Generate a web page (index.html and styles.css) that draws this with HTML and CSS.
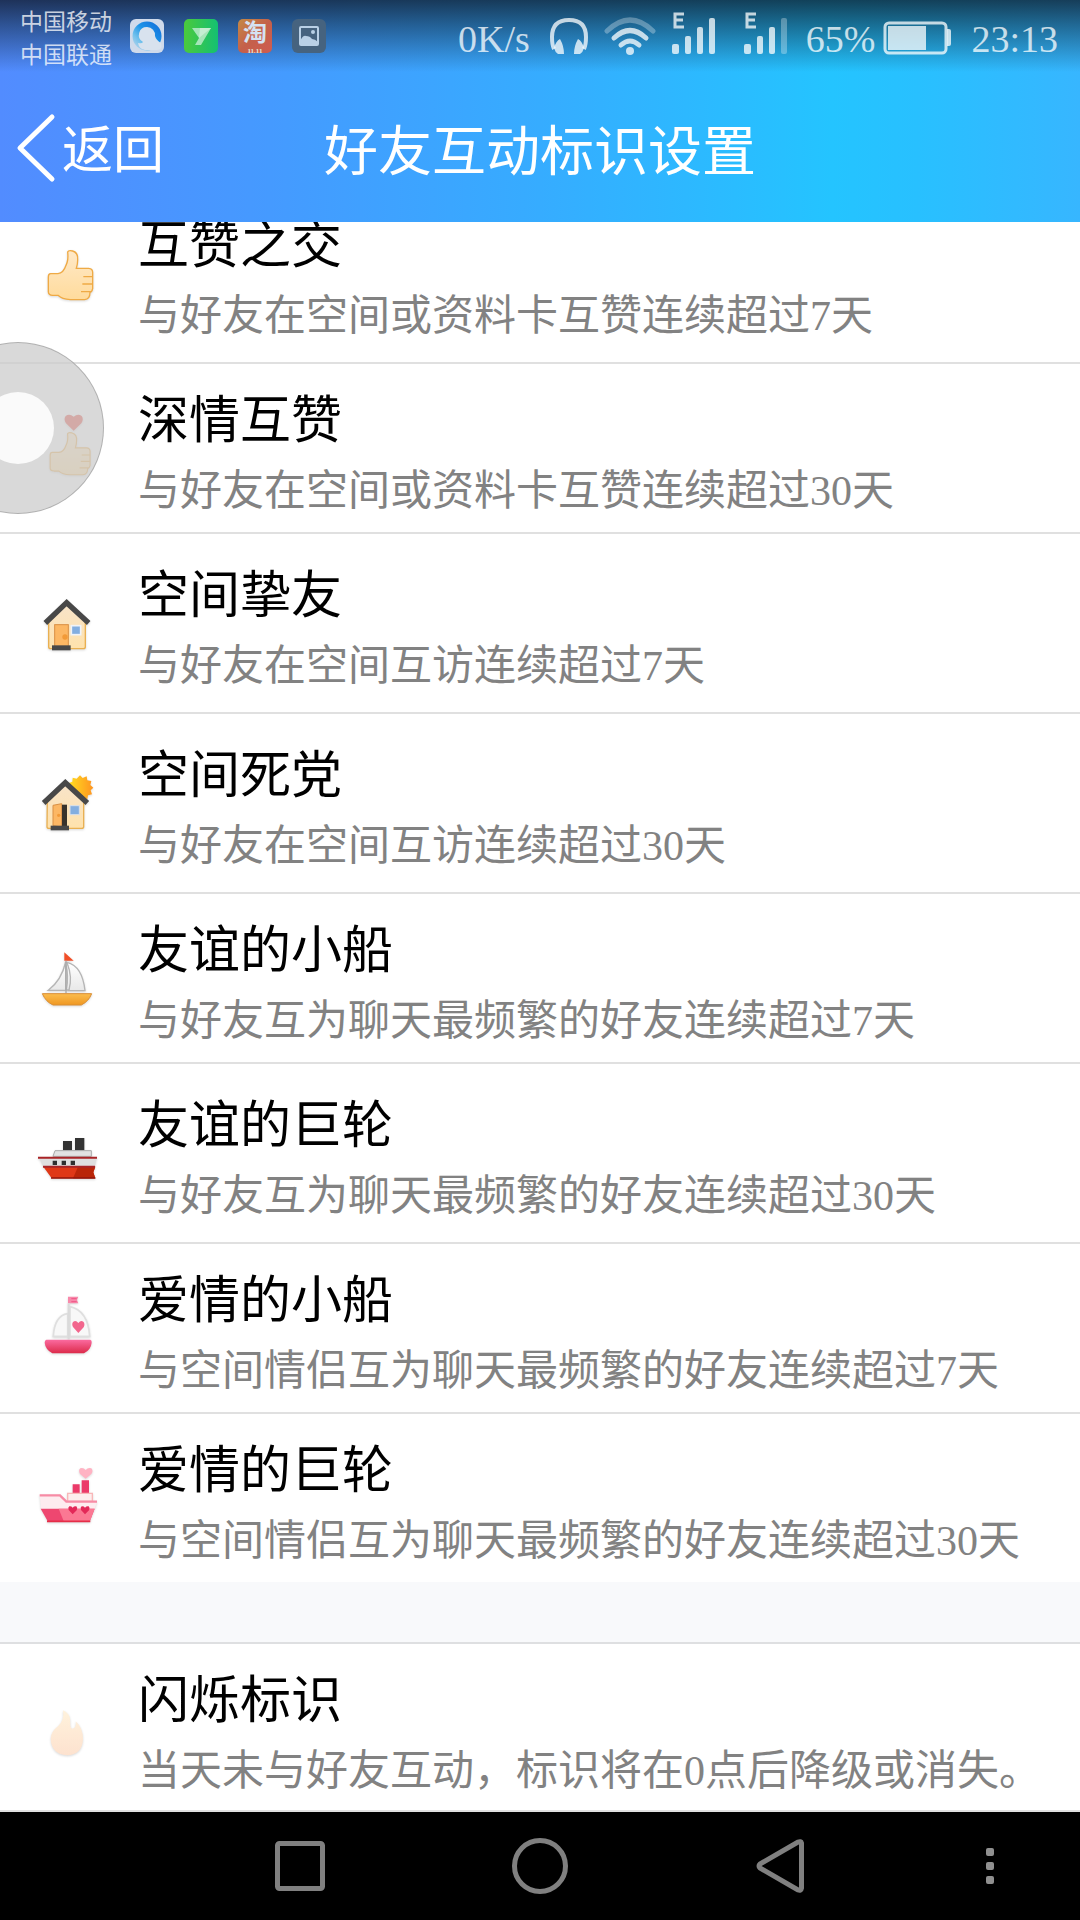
FILE: index.html
```html
<!DOCTYPE html>
<html lang="zh-CN">
<head>
    <meta charset="UTF-8">
    <meta name="viewport" content="width=device-width, initial-scale=1.0">
    <title>好友互动标识设置</title>
    <link rel="stylesheet" href="styles.css">
</head>
<body>
    <!-- Shared gradients -->
    <svg class="defs" aria-hidden="true">
        <defs>
            <linearGradient id="skin" x1="0" y1="0" x2="0" y2="1"><stop offset="0" stop-color="#ffe9c8"/><stop offset="1" stop-color="#ffdb9c"/></linearGradient>
            <linearGradient id="wall" x1="0" y1="0" x2="0" y2="1"><stop offset="0" stop-color="#f8e4ca"/><stop offset="1" stop-color="#ffe2ac"/></linearGradient>
            <linearGradient id="sail" x1="0" y1="0" x2="0" y2="1"><stop offset="0" stop-color="#ffffff"/><stop offset="1" stop-color="#e8e8e8"/></linearGradient>
            <linearGradient id="wood" x1="0" y1="0" x2="0" y2="1"><stop offset="0" stop-color="#fbbd4e"/><stop offset="1" stop-color="#ef9722"/></linearGradient>
            <linearGradient id="pink" x1="0" y1="0" x2="0" y2="1"><stop offset="0" stop-color="#fb6ba0"/><stop offset="1" stop-color="#dc2a4a"/></linearGradient>
            <linearGradient id="sun"><stop offset="0" stop-color="#ffdf20"/><stop offset="1" stop-color="#ff9420"/></linearGradient>
            <linearGradient id="flame" x1="0" y1="0" x2="0" y2="1"><stop offset="0" stop-color="#fff2dc"/><stop offset="1" stop-color="#fde2cf"/></linearGradient>
            <linearGradient id="ring" x1="0" y1="1" x2="1" y2="0"><stop offset="0" stop-color="#cfdaeb"/><stop offset=".3" stop-color="#6fc0ec"/><stop offset=".55" stop-color="#1c94e8"/><stop offset="1" stop-color="#1268d8"/></linearGradient>
            <linearGradient id="green"><stop offset="0" stop-color="#4bca3c"/><stop offset="1" stop-color="#14c072"/></linearGradient>
            <linearGradient id="orange" x1="0" y1="0" x2="1" y2="1"><stop offset="0" stop-color="#c48a45"/><stop offset=".5" stop-color="#c4604a"/><stop offset="1" stop-color="#cf5c50"/></linearGradient>
        </defs>
    </svg>

    <header class="header">
        <div class="status-bar">
            <div class="carriers">
                <span>中国移动</span>
                <span>中国联通</span>
            </div>
            <div class="notifications">
                <svg viewBox="0 0 34 34">
                    <rect width="34" height="34" rx="6" fill="#cfdaeb"/>
                    <circle cx="17" cy="17" r="14.500" fill="url(#ring)"/>
                    <path d="M17 8A8 8 0 0 1 25 17Q26 21 31 24Q33 31 27 31H15Q9 30 8 24Q12 25 13 23A8 8 0 0 1 17 8Z" fill="#d8e2ee"/>
                </svg>
                <svg viewBox="0 0 34 34">
                    <rect width="34" height="34" rx="5" fill="url(#green)"/>
                    <path d="M8 9H27L17 26H11L15 19Z" fill="#a5e5b8"/>
                    <path d="M16 9H27L15 19Z" fill="#c4eed2"/>
                </svg>
                <svg viewBox="0 0 34 34">
                    <rect width="34" height="34" rx="5" fill="url(#orange)"/>
                    <text x="17" y="22" font-size="24" font-weight="700" text-anchor="middle" fill="#d5e2f2" class="cjk">淘</text>
                    <text x="17" y="34" font-size="7" font-weight="700" text-anchor="middle" fill="#e5eadc">11.11</text>
                </svg>
                <svg viewBox="0 0 34 34">
                    <rect width="34" height="34" rx="6" fill="#46637f"/>
                    <rect x="8" y="8" width="18" height="18" rx="1" fill="none" stroke="#b9d0e6" stroke-width="2"/>
                    <path d="M8 22Q11 16 14 17Q18 17 20 20Q23 20 26 23V26H8Z" fill="#b9d0e6"/>
                    <circle cx="21" cy="13" r="2" fill="#b9d0e6"/>
                </svg>
            </div>
            <div class="indicators">
                <span class="status-text speed">0K/s</span>
                <svg width="38" height="38" viewBox="0 0 38 38" class="headset">
                    <path d="M4 32Q2 28 2 20C2 8 8 3 19 3S36 8 36 20Q36 28 34 32" fill="none" stroke="currentColor" stroke-width="4"/>
                    <path d="M10 22Q14 29 14 37H8Q5 35 4 31Q6 24 10 22ZM28 22Q24 29 24 37H30Q33 35 34 31Q32 24 28 22Z" fill="currentColor"/>
                </svg>
                <svg width="52" height="38" viewBox="0 0 52 38" class="wifi">
                    <g fill="none" stroke="currentColor" stroke-width="5" stroke-linecap="round">
                        <path d="M3 14Q26-8 49 14" opacity=".4"/>
                        <path d="M10 21Q26 6 42 21"/>
                        <path d="M17 28Q26 20 35 28"/>
                    </g>
                    <circle cx="26" cy="34" r="4" fill="currentColor"/>
                </svg>
                <svg width="44" height="44" viewBox="0 0 44 44" class="signal">
                    <path d="M12 3H3V16H12M3 9H11" fill="none" stroke="currentColor" stroke-width="3"/>
                    <g fill="currentColor">
                        <rect x="0" y="33" width="7" height="10" rx="2"/>
                        <rect x="13" y="25" width="6" height="18" rx="2"/>
                        <rect x="25" y="16" width="6" height="27" rx="2"/>
                        <rect x="37" y="7" width="6" height="36" rx="2"/>
                    </g>
                </svg>
                <svg width="44" height="44" viewBox="0 0 44 44" class="signal">
                    <path d="M12 3H3V16H12M3 9H11" fill="none" stroke="currentColor" stroke-width="3"/>
                    <g fill="currentColor">
                        <rect x="0" y="33" width="7" height="10" rx="2"/>
                        <rect x="13" y="25" width="6" height="18" rx="2"/>
                        <rect x="25" y="16" width="6" height="27" rx="2"/>
                        <rect x="37" y="7" width="6" height="36" rx="2" opacity=".4"/>
                    </g>
                </svg>
                <span class="status-text percent">65%</span>
                <svg width="68" height="34" viewBox="0 0 68 34" class="battery">
                    <rect x="2" y="2" width="61" height="30" rx="4" fill="none" stroke="currentColor" stroke-width="3"/>
                    <rect x="5" y="5" width="38" height="24" fill="currentColor"/>
                    <path d="M64 8H66Q68 8 68 10V23Q68 25 66 25H64Z" fill="currentColor"/>
                </svg>
                <time class="status-text">23:13</time>
            </div>
        </div>
        <div class="title-bar">
            <a href="#" class="back">
                <svg width="38" height="68" viewBox="0 0 38 68"><path d="M36 0L4 31L36 62" fill="none" stroke="currentColor" stroke-width="5" stroke-linecap="round" stroke-linejoin="round"/></svg>
                <span>返回</span>
            </a>
            <h1>好友互动标识设置</h1>
        </div>
    </header>

    <main class="content">
        <ul class="list">
            <li class="row tall first">
                <svg class="icon" viewBox="93 81 216 216">
                    <g id="thumb">
                        <path d="M152 191H174Q190 190 198 166Q206 150 203 126Q205 120 218 123Q235 128 233 150Q233 163 229 175H266Q278 176 278 187V236Q276 246 270 247Q270 268 254 269H211Q186 268 174 256H158Q145 255 145 245V201Q145 191 152 191Z" fill="url(#skin)" stroke="#efaa45" stroke-width="4"/>
                        <path d="M250 200H278M247 222H278M243 245H274" stroke="#efaa45" stroke-width="4"/>
                    </g>
                </svg>
                <div class="info">
                    <h2>互赞之交</h2>
                    <p>与好友在空间或资料卡互赞连续超过7天</p>
                </div>
            </li>
            <li class="row">
                <svg class="icon" viewBox="93 606 216 216">
                    <path d="M221 662L198 640Q190 628 197 618Q208 609 221 620Q234 609 245 618Q252 628 244 640Z" fill="#e84438"/>
                    <use href="#thumb" transform="translate(20 563) scale(.9 .86)"/>
                </svg>
                <div class="info">
                    <h2>深情互赞</h2>
                    <p>与好友在空间或资料卡互赞连续超过30天</p>
                </div>
            </li>
            <li class="row tall">
                <svg class="icon" viewBox="93 51 216 216">
                    <path d="M146 150L200 98L256 150V230Q256 236 250 236H152Q146 236 146 230Z" fill="url(#wall)" stroke="#e9b052" stroke-width="4"/>
                    <path d="M136 159L200 98L266 159" fill="none" stroke="#484848" stroke-width="16"/>
                    <rect x="164" y="164" width="41" height="66" fill="#fcb764" stroke="#d99045" stroke-width="3"/>
                    <circle cx="195" cy="201" r="8" fill="#f29a38"/>
                    <rect x="214" y="167" width="28" height="27" fill="#83aee0" stroke="#f0f3f8" stroke-width="5"/>
                    <rect x="156" y="226" width="56" height="15" fill="#484848"/>
                </svg>
                <div class="info">
                    <h2>空间挚友</h2>
                    <p>与好友在空间互访连续超过7天</p>
                </div>
            </li>
            <li class="row tall">
                <svg class="icon" viewBox="93 591 216 216">
                    <path d="M240 616L248 624L260 619L262 631L274 633L271 645L280 653L272 661L276 673L264 676L262 688L250 682L238 690L230 680L218 680L217 668L206 662L211 650L205 640L217 635L218 623L230 626Z" fill="url(#sun)"/>
                    <path d="M142 690L196 638L251 690V770Q251 775 245 775H147Q141 775 141 770Z" fill="url(#wall)" stroke="#e9b052" stroke-width="4"/>
                    <path d="M131 699L196 638L262 699" fill="none" stroke="#484848" stroke-width="16"/>
                    <path d="M159 706L185 701V771L159 767Z" fill="#fcb764" stroke="#d99045" stroke-width="3"/>
                    <rect x="186" y="704" width="15" height="64" fill="#38332c"/>
                    <circle cx="176" cy="736" r="5" fill="#f29a38"/>
                    <rect x="210" y="707" width="28" height="27" fill="#83aee0" stroke="#d9e0ea" stroke-width="3"/>
                    <rect x="152" y="767" width="55" height="14" fill="#484848"/>
                </svg>
                <div class="info">
                    <h2>空间死党</h2>
                    <p>与好友在空间互访连续超过30天</p>
                </div>
            </li>
            <li class="row">
                <svg class="icon" viewBox="93 66 216 216">
                    <path d="M193 97L221 122H193Z" fill="#f14e27"/>
                    <g fill="url(#sail)" stroke="#b5b5b5" stroke-width="4">
                        <path d="M197 126Q185 180 145 211H197Z"/>
                        <path d="M201 127Q247 138 255 212H205Q212 190 207 160Z"/>
                        <path d="M197 128Q207 170 199 210H207Q218 170 201 128Z"/>
                    </g>
                    <path d="M198 122V219" stroke="#aaaaaa" stroke-width="4"/>
                    <path d="M127 221H275Q267 243 244 255H159Q137 245 127 221Z" fill="url(#wood)" stroke="#d98e35" stroke-width="3"/>
                </svg>
                <div class="info">
                    <h2>友谊的小船</h2>
                    <p>与好友互为聊天最频繁的好友连续超过7天</p>
                </div>
            </li>
            <li class="row tall">
                <svg class="icon" viewBox="93 591 216 216">
                    <path d="M189 663H216V691H189ZM225 654H253V691H225Z" fill="#333333"/>
                    <path d="M159 709L165 692H274V709Z" fill="#e2e2e2" stroke="#a9a9a9" stroke-width="3"/>
                    <path d="M116 712H291L284 742H131Z" fill="#dfdfdf"/>
                    <path d="M130 740H286L280 757L286 775H155Z" fill="#df3817"/>
                    <path d="M234 740H286L280 757L286 775H219Z" fill="#b92508"/>
                    <path d="M114 713H291M129 740H285" stroke="#a92427" stroke-width="6"/>
                    <path d="M153 774H286" stroke="#91160c" stroke-width="4"/>
                    <path d="M158 722H171V735H158ZM185 722H198V735H185ZM212 722H225V735H212Z" fill="#303030"/>
                </svg>
                <div class="info">
                    <h2>友谊的巨轮</h2>
                    <p>与好友互为聊天最频繁的好友连续超过30天</p>
                </div>
            </li>
            <li class="row">
                <svg class="icon" viewBox="93 66 216 216">
                    <path d="M204 80H235L231 90L235 100H204Z" fill="#f889aa"/>
                    <path d="M214 86H230M214 95H230" stroke="#ef5686" stroke-width="3"/>
                    <path d="M203 131Q164 137 160 199H203ZM210 110Q264 122 269 199H210Z" fill="#f8f8f8" stroke="#dfdfdf" stroke-width="5"/>
                    <path d="M206 100V208" stroke="#dadada" stroke-width="6"/>
                    <path d="M235 189L219 171Q214 160 220 155Q228 150 235 159Q242 150 250 155Q256 161 251 172Z" fill="#f2668d"/>
                    <path d="M139 209H271Q276 210 275 218Q273 239 252 250H157Q136 238 134 218Q134 210 139 209Z" fill="url(#pink)"/>
                </svg>
                <div class="info">
                    <h2>爱情的小船</h2>
                    <p>与空间情侣互为聊天最频繁的好友连续超过7天</p>
                </div>
            </li>
            <li class="row">
                <svg class="icon" viewBox="93 576 216 216">
                    <path d="M257 626L240 612Q234 600 241 595Q250 592 257 600Q264 592 274 595Q281 602 274 612Z" fill="#ffb3c3"/>
                    <path d="M218 643H239V670H218ZM245 631H267V670H245Z" fill="#eb3a69"/>
                    <path d="M203 670H277V694H203Z" fill="#fdeeee" stroke="#f8b7b8" stroke-width="4"/>
                    <path d="M119 675H180L199 695H291L284 718H123Z" fill="#fdecef"/>
                    <path d="M122 716H284L269 755H144Z" fill="#ee4770"/>
                    <path d="M176 716H284L269 755H192Z" fill="#fb7893"/>
                    <path d="M119 676H180L199 695H291" fill="none" stroke="#f78ba5" stroke-width="7"/>
                    <path d="M141 754H271" stroke="#e52d47" stroke-width="5"/>
                    <path id="porthole" d="M218 733L206 720Q203 712 208 709Q214 708 218 713Q222 708 229 709Q234 713 230 721Z" fill="#e32858"/>
                    <use href="#porthole" x="37"/>
                </svg>
                <div class="info">
                    <h2>爱情的巨轮</h2>
                    <p>与空间情侣互为聊天最频繁的好友连续超过30天</p>
                </div>
            </li>
        </ul>

        <ul class="list separate">
            <li class="row">
                <svg class="icon" viewBox="93 363 216 216">
                    <path d="M189 421Q213 431 211 458Q210 474 217 476Q230 475 227 454Q249 474 249 507Q247 554 201 556Q155 553 152 507Q153 484 174 469Q194 451 189 421Z" fill="url(#flame)"/>
                </svg>
                <div class="info">
                    <h2>闪烁标识</h2>
                    <p>当天未与好友互动，标识将在0点后降级或消失。</p>
                </div>
            </li>
        </ul>
    </main>

    <button type="button" class="touch-ball" aria-label="悬浮球"></button>

    <nav class="nav-bar">
        <button type="button" aria-label="最近任务"><svg width="58" height="58" viewBox="0 0 58 58"><rect x="6.500" y="6.500" width="45" height="45" rx="2"/></svg></button>
        <button type="button" aria-label="主页"><svg width="58" height="58" viewBox="0 0 58 58"><circle cx="29" cy="29" r="25.500"/></svg></button>
        <button type="button" aria-label="返回上一级"><svg width="58" height="58" viewBox="0 0 58 58"><path d="M50.500 6Q50 4 47 5L9 27Q7 29 9 31L47 53Q50 54 50.500 51Z"/></svg></button>
        <button type="button" aria-label="菜单"><svg width="58" height="58" viewBox="0 0 58 58" class="dots"><rect x="25" y="11" width="8" height="8" rx="2"/><rect x="25" y="25" width="8" height="8" rx="2"/><rect x="25" y="39" width="8" height="8" rx="2"/></svg></button>
    </nav>
</body>
</html>
```
FILE: styles.css
```css
* {
    box-sizing: border-box;
}

body {
    position: relative;
    display: flex;
    flex-direction: column;
    min-height: 100vh;
    margin: 0;
    background: #f8f9fb;
    color: #000;
    font-family: "Liberation Serif", "Noto Sans CJK SC", serif;
    overflow-x: hidden;
}

h1, h2, p, ul {
    margin: 0;
    padding: 0;
    font-weight: 400;
}

svg {
    display: block;
    flex: none;
}

button {
    padding: 0;
    border: 0;
    background: none;
}

.defs {
    position: absolute;
    width: 0;
    height: 0;
}

.cjk {
    font-family: "Noto Sans CJK SC", sans-serif;
}

/* Header */
.header {
    position: relative;
    z-index: 1;
    background:
        linear-gradient(rgba(10, 15, 25, 0.72), rgba(10, 25, 40, 0.5) 24px, rgba(0, 30, 60, 0) 72px),
        linear-gradient(90deg, #528cff, #459aff 25%, #36acff 50%, #24c4ff 77%, #28c0ff 85%, #37b6ff);
    color: #fff;
}

.status-bar {
    display: flex;
    align-items: center;
    height: 78px;
    padding: 0 22px 0 20px;
    color: rgba(255, 255, 255, 0.75);
}

.carriers {
    display: flex;
    flex-direction: column;
    font-size: 23px;
    line-height: 33px;
}

.notifications {
    display: flex;
    gap: 20px;
    margin-left: 18px;
    margin-bottom: 6px;
}

.notifications svg {
    width: 34px;
    height: 34px;
    overflow: visible;
}

.indicators {
    display: flex;
    align-items: center;
    margin-left: auto;
}

.status-text {
    font-size: 38px;
    line-height: 78px;
}

.speed {
    margin-right: 20px;
}

.headset,
.wifi {
    margin-right: 16px;
    margin-bottom: 6px;
}

.signal {
    margin-right: 28px;
    margin-bottom: 12px;
}

.signal + .percent {
    margin-left: -10px;
    margin-right: 8px;
}

.battery {
    margin-right: 20px;
    margin-bottom: 2px;
}

.title-bar {
    display: grid;
    grid-template-columns: 1fr auto 1fr;
    align-items: center;
    height: 144px;
    padding: 2px 16px 0;
}

.back {
    display: flex;
    align-items: center;
    gap: 8px;
    color: inherit;
    font-size: 51px;
    line-height: 70px;
    text-decoration: none;
}

.back svg {
    overflow: visible;
}

.title-bar h1 {
    padding-top: 4px;
    font-size: 54px;
    line-height: 70px;
}

/* List */
.content {
    flex: 1;
}

.list {
    list-style: none;
    background: #fff;
}

.row {
    display: flex;
    align-items: center;
    gap: 35px;
    padding: 0 31px;
    border-bottom: 2px solid #e0e0e0;
}

.list:first-child .row:last-child {
    border-bottom: 0;
}

.info {
    flex: 1;
    padding: 22px 0 6px;
    white-space: nowrap;
}

.tall .info {
    padding: 27px 0 11px;
}

.separate {
    margin-top: 60px;
    border-top: 2px solid #dedfe1;
}

.separate .info {
    padding-bottom: 4px;
}

/* the list is scrolled, so the first row sits partly under the header */
.first {
    margin-top: -38px;
}

.icon {
    width: 72px;
    height: 72px;
    filter: drop-shadow(0 1px 1px rgba(0, 0, 0, 0.15));
}

.info h2 {
    font-size: 51px;
    line-height: 70px;
}

.info p {
    color: #828282;
    font-size: 42px;
    line-height: 70px;
}

/* Floating touch ball */
.touch-ball {
    position: absolute;
    z-index: 2;
    top: 342px;
    left: -68px;
    display: flex;
    align-items: center;
    justify-content: center;
    width: 172px;
    height: 172px;
    border: 1px solid rgba(160, 160, 160, 0.7);
    border-radius: 50%;
    background: rgba(204, 204, 204, 0.75);
}

.touch-ball::before {
    content: "";
    width: 72px;
    height: 72px;
    border-radius: 50%;
    background: #fafafa;
}

/* Navigation */
.nav-bar {
    display: grid;
    grid-template-columns: 3fr 4fr 4fr 4fr 3fr;
    height: 108px;
    background: #000;
}

.nav-bar button {
    display: flex;
    align-items: center;
    justify-content: center;
}

.nav-bar button:first-child {
    grid-column: 2;
}

.nav-bar svg {
    fill: none;
    stroke: #808080;
    stroke-width: 5;
}

.nav-bar .dots {
    fill: #909090;
    stroke: none;
}
```
